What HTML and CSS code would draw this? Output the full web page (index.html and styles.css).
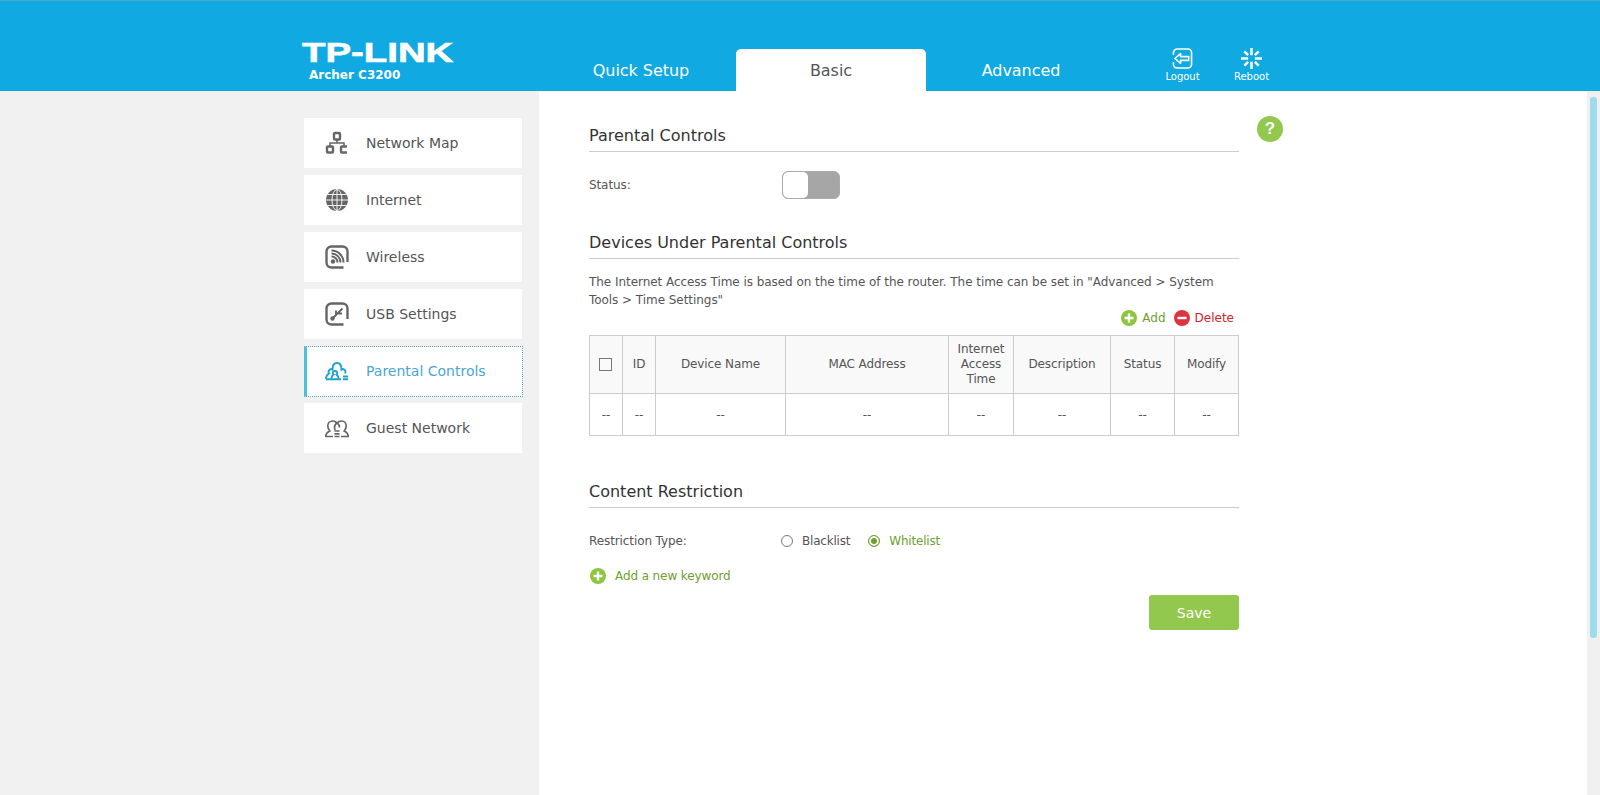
FILE: index.html
```html
<!DOCTYPE html>
<html lang="en">
<head>
    <meta charset="UTF-8">
    <meta name="viewport" content="width=device-width, initial-scale=1.0">
    <title>Archer C3200</title>
    <link rel="stylesheet" href="styles.css">
</head>
<body>
    <!-- Top bar -->
    <header class="top-bar">
        <div class="brand">
            <div class="brand-logo"><span>TP-LINK</span></div>
            <div class="brand-model">Archer C3200</div>
        </div>
        <nav class="tabs">
            <a class="tab">Quick Setup</a>
            <a class="tab tab-active">Basic</a>
            <a class="tab">Advanced</a>
        </nav>
        <div class="top-actions">
            <a class="top-action">
                <svg class="top-icon" viewBox="0 0 22 22" fill="none" stroke="#fff" stroke-width="1.7">
                    <path d="M1.500 7V5A4 4 0 0 1 5.500 1h11a4 4 0 0 1 4 4v12a4 4 0 0 1-4 4h-11a4 4 0 0 1-4-4v-2"/>
                    <path d="M3 11l6-5v3h8.500v4H9v3z" stroke-linejoin="round"/>
                </svg>
                <span>Logout</span>
            </a>
            <a class="top-action">
                <svg class="top-icon" viewBox="0 0 22 22" fill="none" stroke="#fff" stroke-width="2.6">
                    <path d="M11 0v7.500M11 14.500V22M0 11h7.500M14.500 11H22M3.500 3.500l4 4M14.500 14.500l4 4M18.500 3.500l-4 4M7.500 14.500l-4 4"/>
                </svg>
                <span>Reboot</span>
            </a>
        </div>
    </header>

    <div class="page">
        <!-- Side menu -->
        <aside class="sidebar">
            <a class="menu-item">
                <svg class="menu-icon" viewBox="0 0 24 24" fill="none" stroke="currentColor" stroke-width="2.400">
                    <rect x="9" y="2" width="6" height="6.500" rx="1"/>
                    <rect x="2" y="15.500" width="6" height="6" rx="1"/>
                    <path d="M22 15.500h-5a1 1 0 0 0-1 1v4a1 1 0 0 0 1 1h5"/>
                    <path d="M12 8.500V12M5 15.500V12h14v3.500" stroke-width="1.600"/>
                </svg>
                <span>Network Map</span>
            </a>
            <a class="menu-item">
                <svg class="menu-icon" viewBox="0 0 24 24" fill="none">
                    <circle cx="12" cy="12" r="11" fill="currentColor"/>
                    <g stroke="#fff" stroke-width="0.900">
                        <ellipse cx="12" cy="12" rx="5" ry="10.500"/>
                        <path d="M12 1v22M1 12h22M2.500 6.500h19M2.500 17.500h19"/>
                    </g>
                </svg>
                <span>Internet</span>
            </a>
            <a class="menu-item">
                <svg class="menu-icon" viewBox="0 0 24 24" fill="none" stroke="currentColor">
                    <path d="M22.500 17V6.500a5 5 0 0 0-5-5h-11a5 5 0 0 0-5 5v11a5 5 0 0 0 5 5h12" stroke-width="2.400"/>
                    <circle cx="8" cy="16.500" r="2.200" fill="currentColor" stroke="none"/>
                    <path d="M6.500 11.500a6 6 0 0 1 6 6M6.500 8.500a9 9 0 0 1 9 9M6.500 5.500a12 12 0 0 1 12 12" stroke-width="2"/>
                </svg>
                <span>Wireless</span>
            </a>
            <a class="menu-item">
                <svg class="menu-icon" viewBox="0 0 24 24" fill="none" stroke="currentColor">
                    <path d="M22.500 17V6.500a5 5 0 0 0-5-5h-11a5 5 0 0 0-5 5v11a5 5 0 0 0 5 5h12" stroke-width="2.400"/>
                    <circle cx="7.500" cy="16.500" r="2.200" fill="currentColor" stroke="none"/>
                    <path d="M8 16L17.500 6.500M11 13V8.500M12.500 11.500H17" stroke-width="1.900"/>
                </svg>
                <span>USB Settings</span>
            </a>
            <a class="menu-item menu-item-active">
                <svg class="menu-icon" viewBox="0 0 24 24" fill="none" stroke="currentColor" stroke-width="1.900">
                    <path d="M1 20c0-3 1-4.500 3-5.500-.8-1-.8-4 2-4.500.6 0 1.200.2 1.500.5C7.500 7 9 4 12 4s4.500 3 4.500 6.500c.3-.3.9-.5 1.500-.5 2.800.5 2.800 3.500 2 4.500"/>
                    <path d="M6.500 19.500c0-2 .7-3 2-4-1.200-1-1.200-3.500 1.500-3.500s2.700 2.500 1.500 3.500c1.300 1 2 2 2 4"/>
                    <path d="M1 20.200h15M18 17.500h5M18 20.200h5"/>
                </svg>
                <span>Parental Controls</span>
            </a>
            <a class="menu-item">
                <svg class="menu-icon" viewBox="0 0 24 24" fill="none" stroke="currentColor" stroke-width="1.700">
                    <path d="M8 20.500H.8c0-3 2-4.500 4-5.500C3.300 13.500 2.800 12 2.800 10c0-3 2-5 4.700-5 1.800 0 3.400.7 4.500 2 1.100-1.300 2.700-2 4.500-2 2.700 0 4.700 2 4.700 5 0 2-.5 3.500-2 5 2 1 4 2.500 4 5.500H16"/>
                    <path d="M12 7c1.700 1 2.500 2.500 2.500 4.500M12 7c-1.700 1-2.500 2.500-2.500 4.500 0 1 .2 1.700.7 2.500"/>
                    <path d="M9.500 15h5M9.500 17.800h5M9.500 20.500h5"/>
                </svg>
                <span>Guest Network</span>
            </a>
        </aside>

        <!-- Parental controls form -->
        <main class="content">
            <section class="panel">
                <h2 class="panel-title">Parental Controls</h2>
                <div class="form-row status-row">
                    <label class="form-label">Status:</label>
                    <div class="toggle"><span class="toggle-knob"></span></div>
                </div>

                <h2 class="panel-title devices-title">Devices Under Parental Controls</h2>
                <p class="note">The Internet Access Time is based on the time of the router. The time can be set in "Advanced &gt; System Tools &gt; Time Settings"</p>
                <div class="table-actions">
                    <a class="action action-add">
                        <svg class="round-icon" viewBox="0 0 16 16"><circle cx="8" cy="8" r="8" fill="#8cc63f"/><path d="M8 3.500v9M3.500 8h9" stroke="#fff" stroke-width="2.400"/></svg>
                        Add
                    </a>
                    <a class="action action-delete">
                        <svg class="round-icon" viewBox="0 0 16 16"><circle cx="8" cy="8" r="8" fill="#dc3540"/><path d="M3.500 8h9" stroke="#fff" stroke-width="2.400"/></svg>
                        Delete
                    </a>
                </div>
                <table class="device-table">
                    <colgroup>
                        <col class="col-check"><col class="col-id"><col class="col-name"><col class="col-mac">
                        <col class="col-time"><col class="col-desc"><col class="col-status"><col class="col-modify">
                    </colgroup>
                    <thead>
                        <tr>
                            <th><span class="checkbox"></span></th>
                            <th>ID</th>
                            <th>Device Name</th>
                            <th>MAC Address</th>
                            <th>Internet Access Time</th>
                            <th>Description</th>
                            <th>Status</th>
                            <th>Modify</th>
                        </tr>
                    </thead>
                    <tbody>
                        <tr>
                            <td>--</td><td>--</td><td>--</td><td>--</td><td>--</td><td>--</td><td>--</td><td>--</td>
                        </tr>
                    </tbody>
                </table>

                <h2 class="panel-title content-title">Content Restriction</h2>
                <div class="form-row restrict-row">
                    <label class="form-label">Restriction Type:</label>
                    <span class="radio"></span><span class="radio-text">Blacklist</span>
                    <span class="radio radio-on"></span><span class="radio-text radio-text-on">Whitelist</span>
                </div>
                <a class="action action-add keyword">
                    <svg class="round-icon" viewBox="0 0 16 16"><circle cx="8" cy="8" r="8" fill="#8cc63f"/><path d="M8 3.500v9M3.500 8h9" stroke="#fff" stroke-width="2.400"/></svg>
                    Add a new keyword
                </a>
                <div class="save-row"><button class="save">Save</button></div>
            </section>
            <a class="help">?</a>
        </main>
    </div>

    <div class="scrollbar"><div class="scroll-thumb"></div></div>
</body>
</html>
```

FILE: styles.css
```css
html, body {
    height: 100%;
}

body {
    margin: 0;
    font-family: "DejaVu Sans", Verdana, sans-serif;
    font-size: 12px;
    color: #555;
    background-color: #fff;
    display: flex;
    flex-direction: column;
    overflow: hidden;
}

a {
    cursor: pointer;
}

.top-bar {
    height: 90px;
    flex: none;
    display: flex;
    padding-left: 302px;
    background-color: #10a9e2;
    border-top: 1px solid #4fa9cf;
}

.brand {
    width: 244px;
    flex: none;
    color: #fff;
}

.brand-logo {
    margin-top: 39px;
    height: 26px;
    line-height: 26px;
    font-family: "Liberation Sans", Arial, sans-serif;
    font-size: 28px;
    font-weight: bold;
}

.brand-logo span {
    display: inline-block;
    transform: scaleX(1.37);
    transform-origin: left center;
    -webkit-text-stroke: 0.6px #fff;
}

.brand-model {
    margin: 2px 0 0 7px;
    font-size: 12px;
    font-weight: bold;
}

.tabs {
    display: flex;
    align-items: flex-end;
}

.tab {
    width: 190px;
    height: 42px;
    line-height: 43px;
    text-align: center;
    font-size: 16px;
    letter-spacing: -0.05px;
    color: #fff;
}

.tab-active {
    background-color: #fff;
    color: #555;
    border-radius: 5px 5px 0 0;
}

.top-actions {
    display: flex;
    margin-left: 32px;
    padding-top: 47px;
}

.top-action {
    width: 69px;
    display: flex;
    flex-direction: column;
    align-items: center;
    gap: 2px;
    color: #fff;
    font-size: 10px;
}

.top-icon {
    width: 21px;
    height: 21px;
}

.page {
    flex: 1;
    display: flex;
    min-height: 0;
}

.sidebar {
    width: 235px;
    flex: none;
    padding: 27px 0 0 304px;
    background-color: #f1f1f1;
    display: flex;
    flex-direction: column;
    gap: 7px;
}

.menu-item {
    width: 218px;
    height: 50px;
    box-sizing: border-box;
    padding-left: 21px;
    display: flex;
    align-items: center;
    gap: 17px;
    background-color: #fff;
    color: #555;
    font-size: 14px;
}

.menu-icon {
    width: 24px;
    height: 24px;
    flex: none;
    color: #666;
}

.menu-item-active {
    height: 51px;
    margin-bottom: -1px;
    width: 219px;
    padding-left: 18px;
    padding-bottom: 2px;
    color: #4ca6d3;
    border-left: 3px solid #4dc0e0;
    border-top: 1px dotted #5b9eb5;
    border-right: 1px dotted #5b9eb5;
    border-bottom: 1px dotted #5b9eb5;
}

.menu-item-active .menu-icon {
    color: #1ea3d0;
}

.content {
    flex: 1;
    display: flex;
    padding-left: 50px;
}

.panel {
    width: 650px;
    flex: none;
}

.panel-title {
    margin: 27px 0 0;
    height: 34px;
    box-sizing: border-box;
    border-bottom: 1px solid #ccc;
    line-height: 36px;
    font-size: 16px;
    font-weight: normal;
    color: #333;
}

.form-row {
    display: flex;
    align-items: center;
}

.form-label {
    width: 192px;
    flex: none;
    letter-spacing: -0.1px;
}

.status-row {
    height: 28px;
    margin-top: 19px;
}

.toggle {
    width: 58px;
    height: 28px;
    margin-left: 1px;
    box-sizing: border-box;
    border: 1px solid #aaa;
    border-radius: 6px;
    background-color: #a6a6a6;
    overflow: hidden;
}

.toggle-knob {
    display: block;
    width: 25px;
    height: 26px;
    background-color: #fff;
    border-radius: 5px;
}

.devices-title {
    margin-top: 26px;
}

.note {
    margin: 14px 0 0;
    line-height: 18px;
    width: 640px;
    letter-spacing: -0.05px;
}

.table-actions {
    display: flex;
    justify-content: flex-end;
    gap: 8px;
    height: 18px;
    margin: 0 5px 8px 0;
}

.action {
    display: inline-flex;
    align-items: center;
    gap: 5px;
}

.action-add {
    color: #6fa030;
}

.action-delete {
    color: #d5202c;
}

.round-icon {
    width: 16px;
    height: 16px;
}

.device-table {
    width: 649px;
    table-layout: fixed;
    border-collapse: collapse;
    text-align: center;
}

.device-table th,
.device-table td {
    border: 1px solid #ccc;
    padding: 0 4px;
}

.device-table th {
    height: 57px;
    font-weight: normal;
    line-height: 15px;
    letter-spacing: -0.1px;
    background-color: #f9f9f9;
}

.device-table td {
    height: 41px;
}

.col-check { width: 33px; }
.col-id { width: 33px; }
.col-name { width: 130px; }
.col-mac { width: 163px; }
.col-time { width: 65px; }
.col-desc { width: 97px; }
.col-status { width: 64px; }
.col-modify { width: 64px; }

.checkbox {
    display: block;
    width: 11px;
    height: 11px;
    margin: 0 0 0 5px;
    border: 1px solid #777;
    background-color: #fafafa;
}

.content-title {
    margin-top: 38px;
}

.restrict-row {
    height: 18px;
    margin-top: 24px;
}

.radio {
    width: 10px;
    height: 10px;
    flex: none;
    border: 1px solid #777;
    border-radius: 50%;
    background-color: #fff;
}

.radio-on {
    margin-left: 18px;
    border-color: #6fa030;
    background-color: #6fa030;
    box-shadow: inset 0 0 0 2px #fff;
}

.radio-text {
    margin-left: 9px;
    letter-spacing: -0.2px;
}

.radio-text-on {
    color: #6fa030;
}

.keyword {
    display: flex;
    gap: 9px;
    height: 18px;
    margin: 17px 0 0 1px;
    letter-spacing: -0.1px;
}

.save-row {
    display: flex;
    justify-content: flex-end;
    margin-top: 10px;
}

.save {
    width: 90px;
    height: 35px;
    border: none;
    border-radius: 3px;
    background-color: #92c84e;
    color: #fff;
    font-family: inherit;
    font-size: 14px;
    cursor: pointer;
}

.help {
    width: 26px;
    height: 26px;
    margin: 25px 0 0 18px;
    line-height: 26px;
    text-align: center;
    border-radius: 50%;
    background-color: #92c84e;
    color: #fff;
    font-family: "Liberation Sans", Arial, sans-serif;
    font-size: 17px;
    font-weight: bold;
}

.scrollbar {
    position: absolute;
    top: 91px;
    right: 0;
    width: 13px;
    height: 704px;
    background-color: #f0f0f0;
}

.scroll-thumb {
    position: absolute;
    top: 6px;
    left: 3px;
    width: 7px;
    height: 541px;
    border-radius: 3px;
    background-color: #9edcec;
}
```
